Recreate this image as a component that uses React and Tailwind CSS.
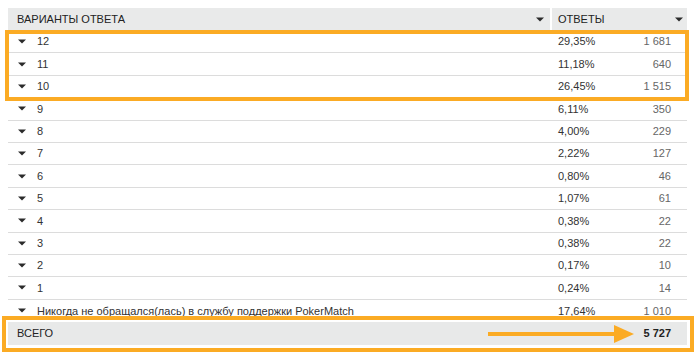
import React from "react";

const rows = [
  ["12", "29,35%", "1 681"],
  ["11", "11,18%", "640"],
  ["10", "26,45%", "1 515"],
  ["9", "6,11%", "350"],
  ["8", "4,00%", "229"],
  ["7", "2,22%", "127"],
  ["6", "0,80%", "46"],
  ["5", "1,07%", "61"],
  ["4", "0,38%", "22"],
  ["3", "0,38%", "22"],
  ["2", "0,17%", "10"],
  ["1", "0,24%", "14"],
  ["Никогда не обращался(лась) в службу поддержки PokerMatch", "17,64%", "1 010"],
];

function Tri({ className = "" }) {
  return (
    <svg width="8" height="5" viewBox="0 0 8 5" className={className}>
      <path d="M0 0.5 L8 0.5 L4 4.5 Z" fill="#2b2b2b" />
    </svg>
  );
}

export default function App() {
  return (
    <div
      className="relative w-[700px] h-[356px] bg-white overflow-hidden text-[11px] text-[#333]"
      style={{ fontFamily: "'Liberation Sans', Arial, sans-serif" }}
    >
      <div className="pt-[8px] pl-[8px] w-[687px] flex flex-col">
        {/* header */}
        <div className="flex h-[23px]">
          <div className="w-[542px] bg-[#e9eaea] flex items-center pl-[9px] pr-[6px] text-[#222]">
            <span className="flex-1">ВАРИАНТЫ ОТВЕТА</span>
            <Tri />
          </div>
          <div className="w-[2px]" />
          <div className="flex-1 bg-[#e9eaea] flex items-center pl-[6px] pr-[4px] text-[#222]">
            <span className="flex-1">ОТВЕТЫ</span>
            <Tri />
          </div>
        </div>
        {rows.map(([label, pct, n], i) => (
          <div
            key={i}
            className={`flex items-center h-[22.4px] ${i < rows.length - 1 ? "border-b border-[#dcdcdc]" : ""}`}
          >
            <div className="w-[544px] flex items-center pl-[10px]">
              <Tri />
              <span className="ml-[11px] text-[#333]">{label}</span>
            </div>
            <div className="flex-1 flex items-center pl-[6px] pr-[16px]">
              <span className="flex-1 text-[#333]">{pct}</span>
              <span className="text-[#666]">{n}</span>
            </div>
          </div>
        ))}
        {/* total */}
        <div className="flex items-center h-[23px] bg-[#e8e9e9] mt-[0px]">
          <div className="flex-1 pl-[9px] text-[#222]">ВСЕГО</div>
          <div className="pr-[16px] font-bold text-[#222]">5 727</div>
        </div>
      </div>

      {/* highlight boxes */}
      <div className="absolute left-[5px] top-[30px] w-[684px] h-[71px] border-[4px] border-[#fbab24]" />
      <div className="absolute left-[2px] top-[316px] w-[692px] h-[36px] border-[4px] border-[#fbab24]" />

      {/* arrow */}
      <svg className="absolute left-[488px] top-[324px]" width="148" height="20" viewBox="0 0 148 20">
        <rect x="0" y="8" width="130" height="4" fill="#fbab24" />
        <path d="M126 1 L146 10 L126 19 Z" fill="#fbab24" />
      </svg>
    </div>
  );
}
